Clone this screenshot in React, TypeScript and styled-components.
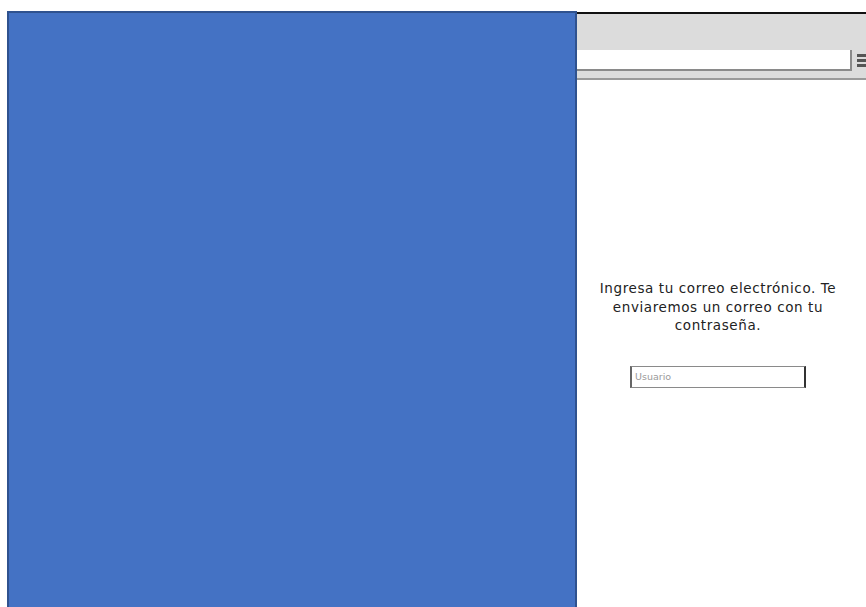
import React from "react";
import styled, { createGlobalStyle } from "styled-components";

const Global = createGlobalStyle`
  html, body { margin: 0; padding: 0; background: #ffffff; }
  body { font-family: "DejaVu Sans", "Liberation Sans", sans-serif; }
`;

const Page = styled.div`
  width: 866px;
  height: 607px;
  overflow: hidden;
  display: flex;
  padding: 11px 0 0 7px;
  box-sizing: border-box;
`;

const Cover = styled.div`
  width: 570px;
  flex: none;
  background: #4472c4;
  border: 2px solid #2f528f;
  border-bottom: none;
  box-sizing: border-box;
  height: 600px;
`;

const Browser = styled.div`
  flex: 1;
  display: flex;
  flex-direction: column;
  margin-top: 1px;
  border-top: 2px solid #111;
`;

const TitleBar = styled.div`
  height: 36px;
  background: #dcdcdc;
`;

const AddressRow = styled.div`
  display: flex;
  align-items: flex-start;
  background: #dcdcdc;
  height: 28px;
  border-bottom: 2px solid #9a9a9a;
`;

const Address = styled.div`
  width: 275px;
  height: 21px;
  background: #fff;
  border-right: 2px solid #8a8a8a;
  border-bottom: 2px solid #8a8a8a;
  box-sizing: border-box;
`;

const Menu = styled.div`
  margin: 4px 0 0 5px;
  display: flex;
  flex-direction: column;
  gap: 2px;
  span {
    display: block;
    width: 10px;
    height: 3px;
    background: #555;
  }
`;

const Content = styled.div`
  flex: 1;
  display: flex;
  flex-direction: column;
  align-items: center;
  padding: 199px 8px 0 0;
`;

const Message = styled.p`
  margin: 0;
  width: 250px;
  text-align: center;
  font-size: 13.5px;
  letter-spacing: 0.6px;
  line-height: 18.5px;
  color: #222;
`;

const Field = styled.input`
  margin-top: 31px;
  width: 176px;
  height: 22px;
  box-sizing: border-box;
  border: 1px solid #8a8a8a;
  border-right: 2px solid #333;
  border-left: 2px solid #666;
  padding: 0 3px;
  font-family: "DejaVu Sans", sans-serif;
  font-size: 9.5px;
  color: #999;
  outline: none;
  &::placeholder { color: #9a9a9a; }
`;

export default function App() {
  return (
    <>
      <Global />
      <Page>
        <Cover />
        <Browser>
          <TitleBar />
          <AddressRow>
            <Address />
            <Menu>
              <span />
              <span />
              <span />
            </Menu>
          </AddressRow>
          <Content>
            <Message>
              Ingresa tu correo electrónico. Te enviaremos un correo con tu contraseña.
            </Message>
            <Field placeholder="Usuario" />
          </Content>
        </Browser>
      </Page>
    </>
  );
}
